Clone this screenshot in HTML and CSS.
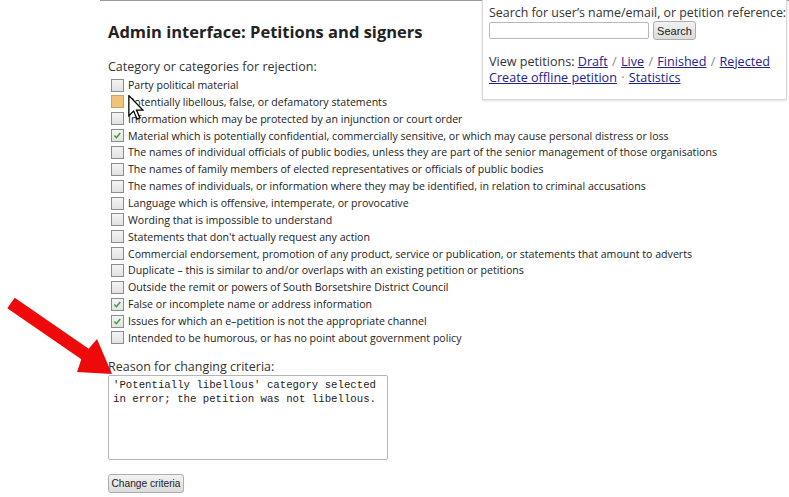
FILE: index.html
```html
<!DOCTYPE html>
<html lang="en">
<head>
<meta charset="utf-8">
<title>Admin interface: Petitions and signers</title>
<link rel="stylesheet" href="styles.css">
</head>
<body>
<div class="page">
  <div class="searchbox">
    <div class="search-label">Search for user’s name/email, or petition reference:</div>
    <div class="search-row"><span class="input"></span><span class="btn search-btn">Search</span></div>
    <div class="links">View petitions: <a href="#">Draft</a> <span class="sep">/</span> <a href="#">Live</a> <span class="sep">/</span> <a href="#">Finished</a> <span class="sep">/</span> <a href="#">Rejected</a></div>
    <div class="links"><a href="#">Create offline petition</a> <span class="sep">·</span> <a href="#">Statistics</a></div>
  </div>
  <h1 class="title">Admin interface: Petitions and signers</h1>
  <div class="label">Category or categories for rejection:</div>
  <ul class="cats">
    <li><span class="cb"></span>Party political material</li>
    <li><span class="cb hover"></span>Potentially libellous, false, or defamatory statements</li>
    <li><span class="cb"></span>Information which may be protected by an injunction or court order</li>
    <li><span class="cb checked"><svg viewBox="0 0 13 13"><path d="M2.8 6.4 L5.2 9 L9.8 3.6"/></svg></span>Material which is potentially confidential, commercially sensitive, or which may cause personal distress or loss</li>
    <li><span class="cb"></span>The names of individual officials of public bodies, unless they are part of the senior management of those organisations</li>
    <li><span class="cb"></span>The names of family members of elected representatives or officials of public bodies</li>
    <li><span class="cb"></span>The names of individuals, or information where they may be identified, in relation to criminal accusations</li>
    <li><span class="cb"></span>Language which is offensive, intemperate, or provocative</li>
    <li><span class="cb"></span>Wording that is impossible to understand</li>
    <li><span class="cb"></span>Statements that don't actually request any action</li>
    <li><span class="cb"></span>Commercial endorsement, promotion of any product, service or publication, or statements that amount to adverts</li>
    <li><span class="cb"></span>Duplicate – this is similar to and/or overlaps with an existing petition or petitions</li>
    <li><span class="cb"></span>Outside the remit or powers of South Borsetshire District Council</li>
    <li><span class="cb checked"><svg viewBox="0 0 13 13"><path d="M2.8 6.4 L5.2 9 L9.8 3.6"/></svg></span>False or incomplete name or address information</li>
    <li><span class="cb checked"><svg viewBox="0 0 13 13"><path d="M2.8 6.4 L5.2 9 L9.8 3.6"/></svg></span>Issues for which an e–petition is not the appropriate channel</li>
    <li><span class="cb"></span>Intended to be humorous, or has no point about government policy</li>
  </ul>
  <div class="label reason">Reason for changing criteria:</div>
  <div class="textarea">'Potentially libellous' category selected
in error; the petition was not libellous.</div>
  <div class="btn submit">Change criteria</div>
</div>
<svg class="arrow" width="130" height="390" viewBox="0 0 130 390"><polygon points="14.7,297.7 88.7,348.7 97,339 112,374 77,372 81.3,359.3 7.3,308.3"/></svg>
<svg class="cursor" width="16" height="26" viewBox="0 0 12 20"><path d="M0.5 0.5 L0.5 16 L4.2 12.4 L6.8 18.6 L9 17.6 L6.4 11.6 L11.3 11.6 Z"/></svg>
</body>
</html>
```
FILE: styles.css
```css
html, body { margin: 0; padding: 0; background: #fff; }
body { font-family: "Open Sans", "DejaVu Sans", sans-serif; color: #222; width: 789px; height: 497px; overflow: hidden; position: relative; }

.page { margin-left: 100px; border-top: 1px solid #9a9a9a; padding-left: 8px; }

.searchbox {
  float: right;
  width: 291px;
  margin-top: -1px;
  margin-right: 2px;
  border: 1px solid #d6d6d6;
  border-top: none;
  box-shadow: 0 1px 2px rgba(0,0,0,0.12);
  padding: 5px 6px 13px 6px;
  background: #fff;
  font-size: 12.4px;
  color: #333;
}
.search-label { line-height: 15px; white-space: nowrap; }
.search-row { display: flex; align-items: center; gap: 4px; margin-top: 1px; }
.input { display: block; width: 158px; height: 15px; border: 1px solid #b8b8b8; border-radius: 2px; background: #fff; }
.btn {
  display: inline-flex; align-items: center; justify-content: center;
  font-family: "Liberation Sans", Arial, sans-serif; font-size: 11px; color: #222;
  background: linear-gradient(#f2f2f2, #dcdcdc);
  border: 1px solid #adadad; border-radius: 3px;
  box-sizing: border-box; white-space: nowrap;
}
.search-btn { width: 43px; height: 19px; }
.links { line-height: 16px; white-space: nowrap; font-size: 12.6px; }
.search-row + .links { margin-top: 14px; }
.links a { color: #23238e; text-decoration: underline; }
.sep { color: #888; margin: 0 1px; }

.title { margin: 21px 0 0; font-size: 16.5px; font-weight: 700; line-height: 20px; color: #222; }
.label { margin-top: 17px; font-size: 12.5px; line-height: 16px; color: #333; }
.cats { list-style: none; margin: 1.6px 0 0; padding: 0 0 0 3px; }
.cats li { display: flex; align-items: center; height: 16.87px; font-size: 10.6px; color: #222; white-space: nowrap; }
.cb {
  flex: none; width: 13px; height: 13px; box-sizing: border-box; margin-right: 4px;
  border: 1px solid #8c8c8c; background: linear-gradient(#f4f4f4, #e2e2e2);
  display: flex; align-items: center; justify-content: center;
}
.cb.hover { background: #f3c27a; border-color: #d0a060; }
.cb svg { width: 13px; height: 13px; }
.cb svg path { fill: none; stroke: #3b9b3b; stroke-width: 1.7; }

.reason { margin-top: 12.4px; }
.textarea {
  width: 280px; height: 85px; box-sizing: border-box;
  border: 1px solid #b5b5b5; border-radius: 2px;
  padding: 2px 4px;
  font-family: "Liberation Mono", monospace; font-size: 10.7px; line-height: 14px;
  white-space: pre; color: #222;
}
.submit { margin-top: 14px; width: 76px; height: 19px; display: flex; font-size: 10.2px; }

.arrow { position: absolute; left: 0; top: 0; }
.arrow polygon { fill: #ee0a0a; }
.cursor { position: absolute; left: 128px; top: 95px; }
.cursor path { fill: #fff; stroke: #000; stroke-width: 1; stroke-linejoin: miter; }
```
